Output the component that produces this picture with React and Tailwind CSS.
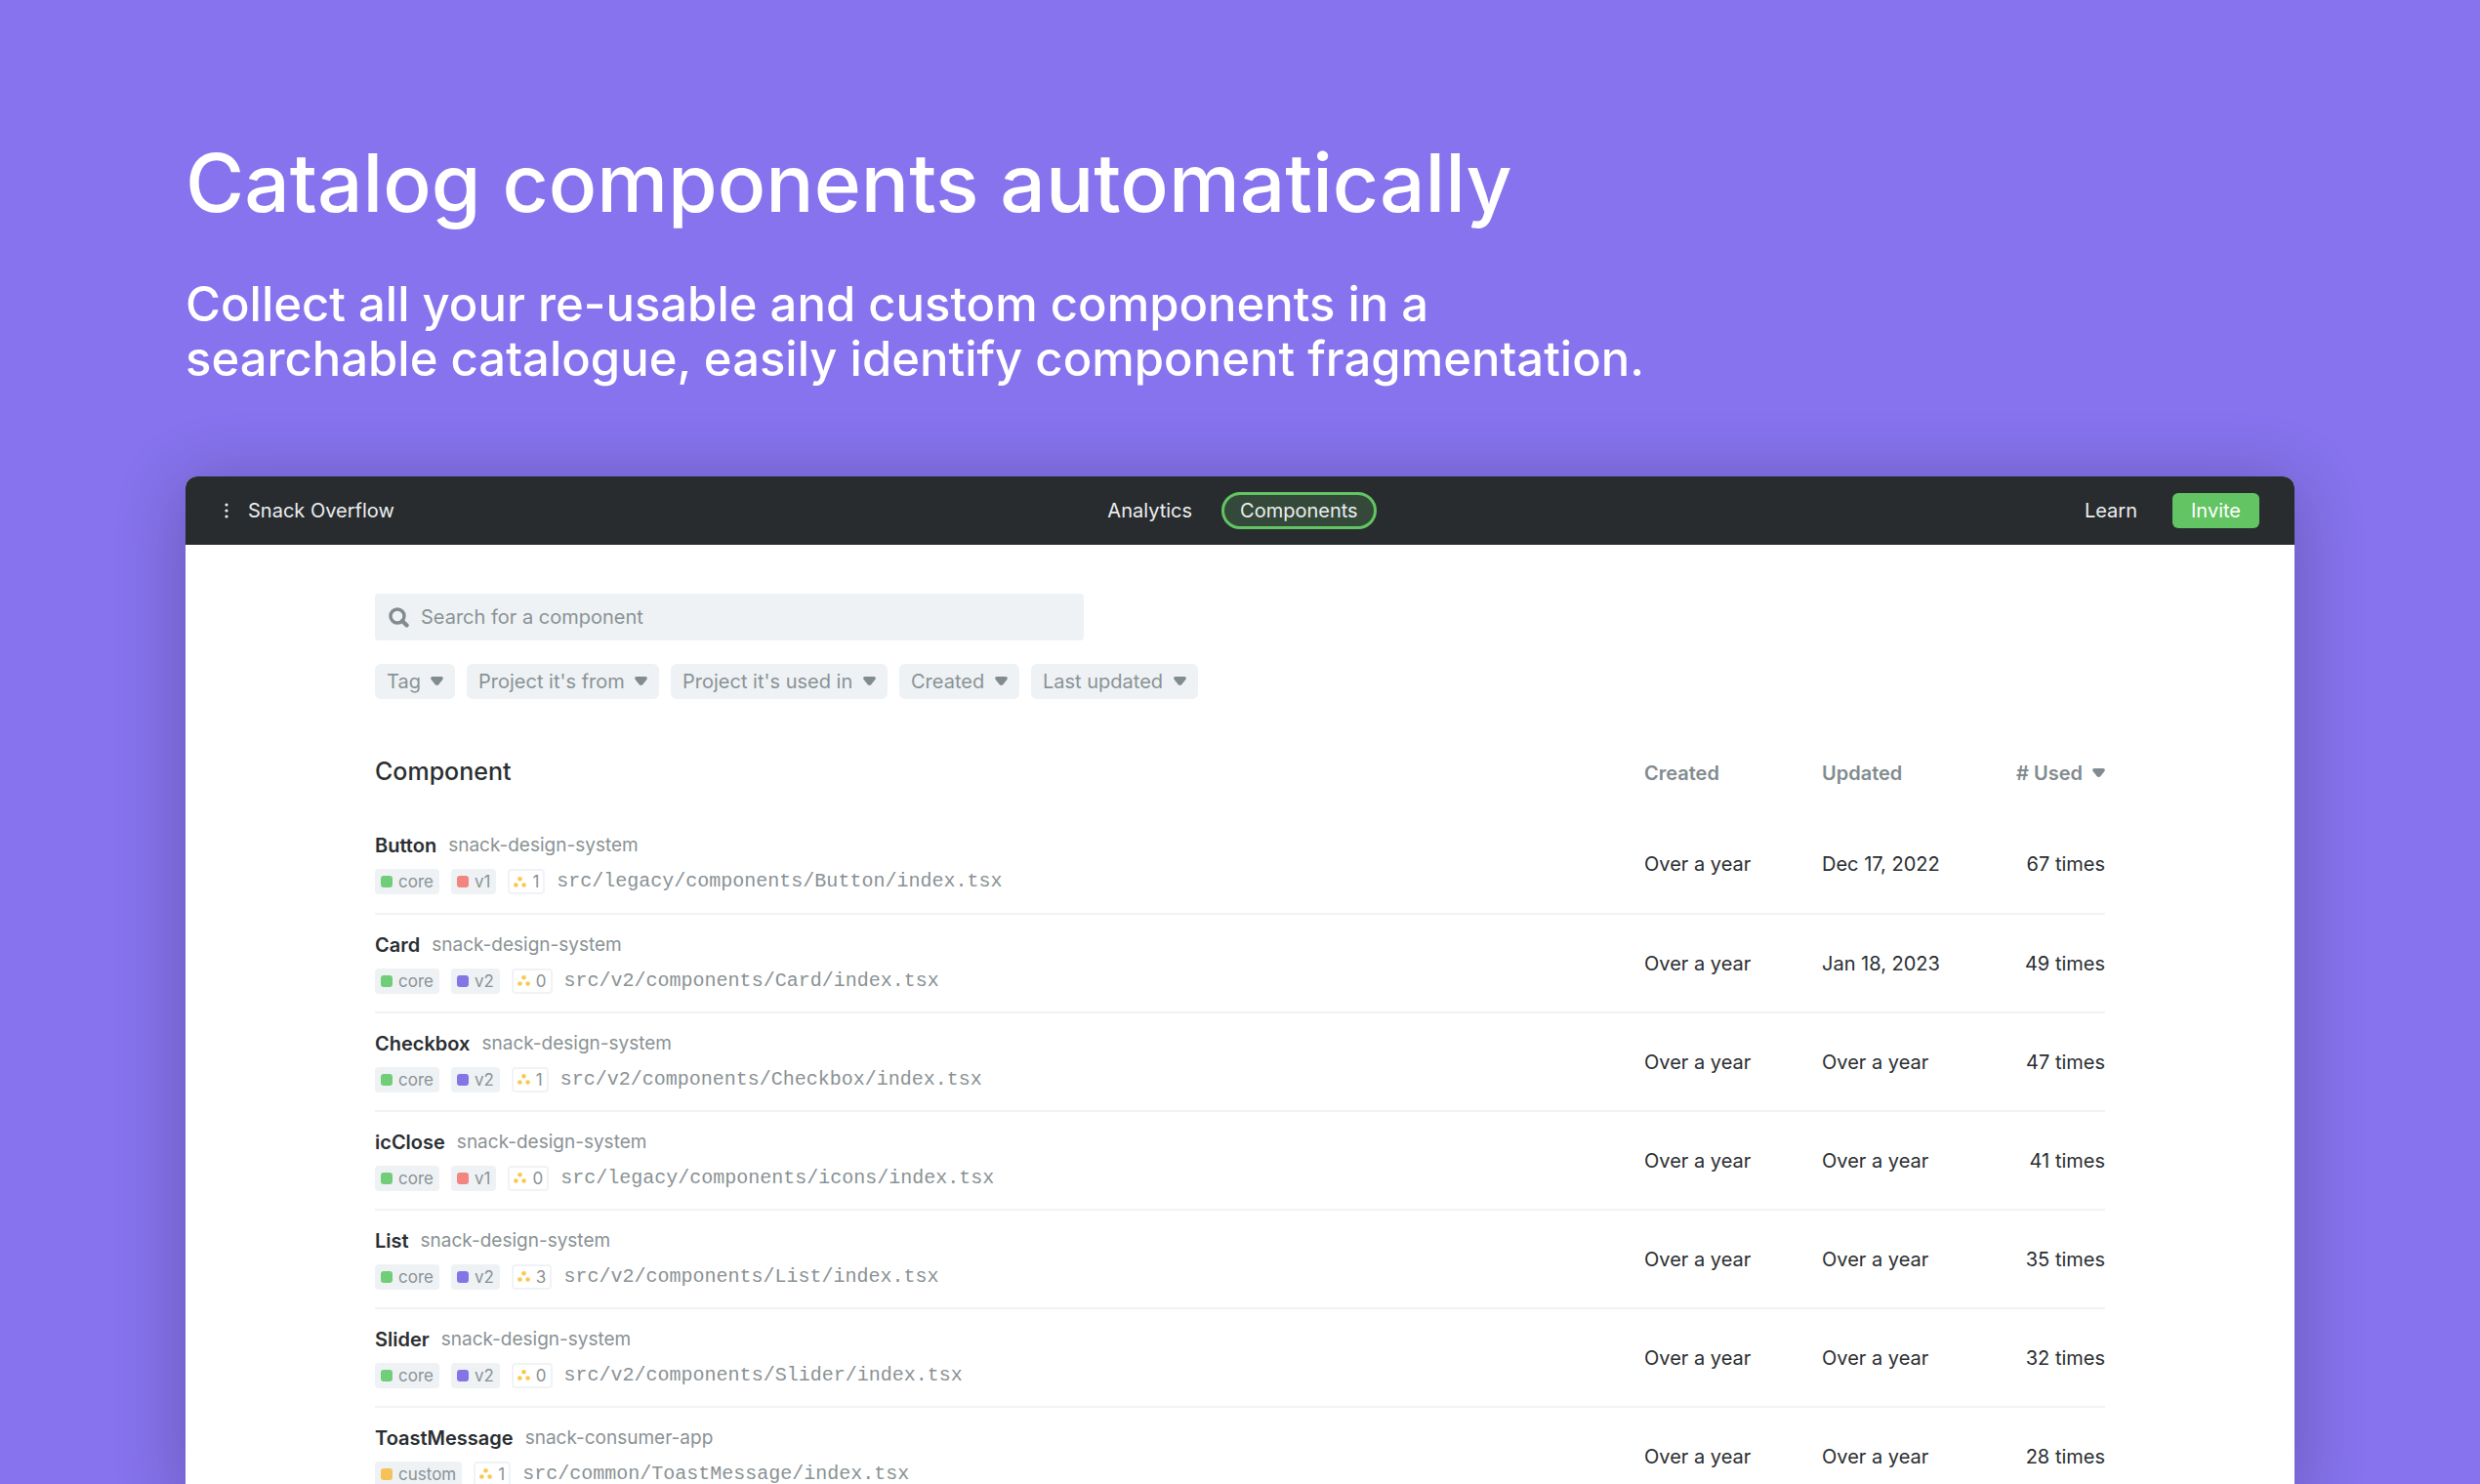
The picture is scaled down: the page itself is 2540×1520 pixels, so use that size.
const NAV = [
  { label: 'Analytics', href: '#analytics', active: false },
  { label: 'Components', href: '#components', active: true },
]

const FILTERS = ['Tag', "Project it's from", "Project it's used in", 'Created', 'Last updated']

const TAG_COLORS = {
  core: 'bg-[#72cd78]',
  v1: 'bg-[#f28580]',
  v2: 'bg-[#8474e6]',
  custom: 'bg-[#f6c157]',
}

const COMPONENTS = [
  { name: 'Button', project: 'snack-design-system', tags: ['core', 'v1'], count: 1, path: 'src/legacy/components/Button/index.tsx', created: 'Over a year', updated: 'Dec 17, 2022', used: 67 },
  { name: 'Card', project: 'snack-design-system', tags: ['core', 'v2'], count: 0, path: 'src/v2/components/Card/index.tsx', created: 'Over a year', updated: 'Jan 18, 2023', used: 49 },
  { name: 'Checkbox', project: 'snack-design-system', tags: ['core', 'v2'], count: 1, path: 'src/v2/components/Checkbox/index.tsx', created: 'Over a year', updated: 'Over a year', used: 47 },
  { name: 'icClose', project: 'snack-design-system', tags: ['core', 'v1'], count: 0, path: 'src/legacy/components/icons/index.tsx', created: 'Over a year', updated: 'Over a year', used: 41 },
  { name: 'List', project: 'snack-design-system', tags: ['core', 'v2'], count: 3, path: 'src/v2/components/List/index.tsx', created: 'Over a year', updated: 'Over a year', used: 35 },
  { name: 'Slider', project: 'snack-design-system', tags: ['core', 'v2'], count: 0, path: 'src/v2/components/Slider/index.tsx', created: 'Over a year', updated: 'Over a year', used: 32 },
  { name: 'ToastMessage', project: 'snack-consumer-app', tags: ['custom'], count: 1, path: 'src/common/ToastMessage/index.tsx', created: 'Over a year', updated: 'Over a year', used: 28 },
]

function Caret({ className = '' }) {
  return (
    <svg aria-hidden="true" width="13" height="10" viewBox="0 0 13 10" fill="#828b8e" className={className}>
      <path d="M2 0h9c1.600 0 2.400 1.700 1.400 2.900L8.200 8.200c-.9 1.100-2.500 1.100-3.400 0L.6 2.900C-.4 1.700.4 0 2 0Z" />
    </svg>
  )
}

function MenuDots() {
  return (
    <svg aria-hidden="true" width="4" height="16" viewBox="0 0 4 16" fill="currentColor">
      <circle cx="2" cy="2" r="1.6" />
      <circle cx="2" cy="8" r="1.6" />
      <circle cx="2" cy="14" r="1.6" />
    </svg>
  )
}

function SearchIcon() {
  return (
    <svg aria-hidden="true" width="21" height="21" viewBox="0 0 21 21" fill="none" stroke="#828b8e" className="shrink-0">
      <circle cx="9" cy="9" r="7" strokeWidth="3.4" />
      <path d="m14 14 4.600 4.600" strokeWidth="4.200" strokeLinecap="round" />
    </svg>
  )
}

function Instances({ count }) {
  return (
    <span className="flex h-[26px] items-center gap-1.5 rounded-sm border-2 border-[#f0f3f6] px-1 text-[17px] leading-5">
      <svg aria-hidden="true" width="13" height="11" viewBox="0 0 13 11" fill="#f9c94f">
        <circle cx="6.5" cy="2.3" r="2.3" />
        <circle cx="2.4" cy="8.5" r="2.3" />
        <circle cx="10.6" cy="8.5" r="2.3" />
      </svg>
      {count}
    </span>
  )
}

function Tag({ name }) {
  return (
    <span className="flex h-[26px] items-center gap-1.5 rounded-sm bg-[#eef2f5] px-1.5 text-[17px] leading-5">
      <span className={`size-3 rounded-[3px] ${TAG_COLORS[name]}`} />
      {name}
    </span>
  )
}

function TopBar() {
  return (
    <header className="grid h-[70px] grid-cols-[1fr_auto_1fr] items-center bg-[#282c2f] px-9 text-[#eceeef]">
      <button type="button" className="flex items-center gap-5 justify-self-start pl-1">
        <MenuDots />
        Snack Overflow
      </button>
      <nav aria-label="Main" className="flex items-center gap-[30px] pl-1">
        {NAV.map((n) => (
          <a
            key={n.label}
            href={n.href}
            aria-current={n.active ? 'page' : undefined}
            className={n.active ? 'rounded-full border-[3px] border-[#62c462] bg-[#34493a] px-4 py-0.5' : ''}
          >
            {n.label}
          </a>
        ))}
      </nav>
      <div className="flex items-center gap-9 justify-self-end">
        <a href="#learn">Learn</a>
        <button type="button" className="h-9 rounded-md bg-[#62c462] px-[19px] text-white">
          Invite
        </button>
      </div>
    </header>
  )
}

function Filter({ label }) {
  return (
    <div className="relative">
      <select aria-label={label} className="h-9 appearance-none rounded-md bg-[#eef2f5] pr-[35px] pl-3 text-[#8a9295]">
        <option>{label}</option>
      </select>
      <Caret className="pointer-events-none absolute top-[13px] right-3" />
    </div>
  )
}

function ComponentRow({ item }) {
  return (
    <tr className="h-[101px] border-b-2 border-[#f0f3f6]">
      <td>
        <div className="flex items-center gap-3 leading-6">
          <a href={`#${item.name}`} className="font-semibold">
            {item.name}
          </a>
          <span className="text-[19px] text-[#8a9295]">{item.project}</span>
        </div>
        <div className="mt-3 flex items-center gap-3 text-[#8a9295]">
          {item.tags.map((t) => (
            <Tag key={t} name={t} />
          ))}
          <Instances count={item.count} />
          <code className="font-['Liberation_Mono',monospace] text-xl leading-6">{item.path}</code>
        </div>
      </td>
      <td>{item.created}</td>
      <td>{item.updated}</td>
      <td className="text-right">{item.used} times</td>
    </tr>
  )
}

export default function App() {
  return (
    <main className="flex h-screen flex-col overflow-hidden bg-[#8673ed] px-[190px] pt-[140px] font-['Inter',sans-serif] text-xl text-[#2a2e31]">
      <h1 className="text-[82px] leading-24 font-medium text-white">Catalog components automatically</h1>
      <p className="mt-12 mb-[92px] text-[49px] leading-14 font-medium text-white">
        Collect all your re-usable and custom components in a
        <br />
        searchable catalogue, easily identify component fragmentation.
      </p>

      <section className="flex-1 rounded-t-xl bg-white shadow-[0_8px_72px_rgba(0,0,0,0.24)]">
        <div className="overflow-hidden rounded-t-xl">
          <TopBar />
        </div>
        <div className="px-[194px] pt-[50px]">
          <label className="flex h-12 w-[726px] items-center gap-3 rounded-sm bg-[#eef2f5] px-3.5">
            <SearchIcon />
            <input
              type="search"
              aria-label="Search for a component"
              placeholder="Search for a component"
              className="w-full bg-transparent outline-none placeholder:text-[#8a9295]"
            />
          </label>

          <div className="mt-6 flex gap-3">
            {FILTERS.map((f) => (
              <Filter key={f} label={f} />
            ))}
          </div>

          <table className="mt-[58px] w-full table-fixed text-left">
            <thead>
              <tr className="h-[61px] align-top text-[#828b8e]">
                <th className="text-[25px] leading-8 font-medium text-[#2a2e31]">Component</th>
                <th className="w-[182px] pt-1 font-semibold">Created</th>
                <th className="w-[182px] pt-1 font-semibold">Updated</th>
                <th className="w-[108px] pt-1 font-semibold">
                  <button type="button" className="flex w-full items-center justify-end gap-2.5 whitespace-nowrap">
                    # Used
                    <Caret />
                  </button>
                </th>
              </tr>
            </thead>
            <tbody>
              {COMPONENTS.map((c) => (
                <ComponentRow key={c.name} item={c} />
              ))}
            </tbody>
          </table>
        </div>
      </section>
    </main>
  )
}
